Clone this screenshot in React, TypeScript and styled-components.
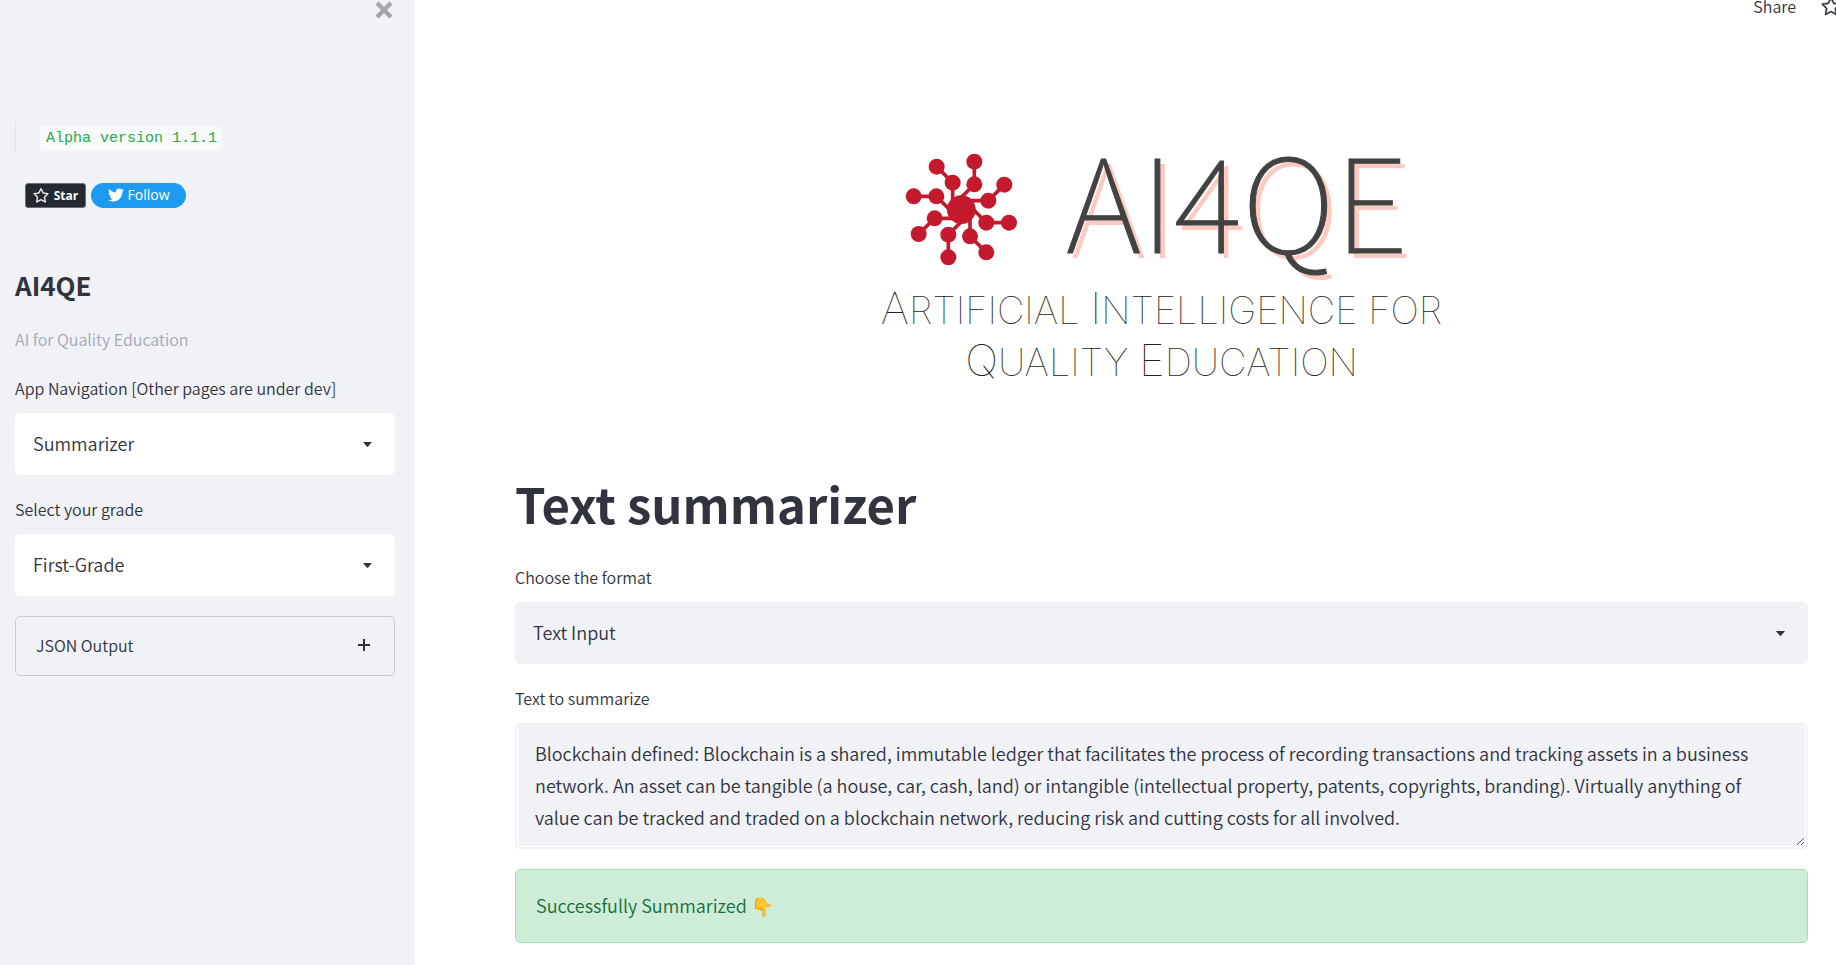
import React, { useId, useState } from "react";
import styled, { createGlobalStyle } from "styled-components";
import { FaTwitter } from "react-icons/fa";
import { GoStar } from "react-icons/go";

const ink = "#31333f";
const panel = "#f0f2f6";

const GlobalStyle = createGlobalStyle`
  * { box-sizing: border-box; }
  body {
    margin: 0;
    background: #fff;
    color: ${ink};
    font-family: "Noto Sans CJK SC", "Open Sans", sans-serif;
    font-size: 18px;
    font-weight: 350;
  }
  button, select, textarea { font: inherit; color: inherit; }
`;

const Page = styled.div`
  display: flex;
  min-height: 100vh;
`;

const Sidebar = styled.aside`
  flex: 0 0 415px;
  padding: 0 20px 20px 15px;
  background: ${panel};
`;

const CloseRow = styled.div`
  display: flex;
  justify-content: flex-end;
  height: 121px;
  padding-right: 2px;
`;

const CloseButton = styled.button`
  display: flex;
  width: 18px;
  height: 18px;
  padding: 0;
  border: 0;
  background: none;
  color: #a3a6ad;
`;

const VersionQuote = styled.blockquote`
  display: flex;
  align-items: flex-end;
  height: 32px;
  margin: 0 0 30px;
  padding: 0 0 2px 24px;
  border-left: 1px solid #e3e5ea;
`;

const VersionCode = styled.code`
  padding: 0 6px;
  border-radius: 5px;
  background: #f8f9fb;
  color: #21ad4b;
  font-family: "Liberation Mono", monospace;
  font-size: 15px;
  font-weight: 400;
  line-height: 25px;
`;

const BadgeRow = styled.div`
  display: flex;
  gap: 5px;
  margin-bottom: 60px;
  padding-left: 10px;
`;

const Badge = styled.a<{ $pill?: boolean }>`
  display: flex;
  align-items: center;
  justify-content: center;
  gap: ${(p) => (p.$pill ? 4 : 5)}px;
  width: ${(p) => (p.$pill ? 95 : 61)}px;
  height: 25px;
  padding-bottom: ${(p) => (p.$pill ? 2 : 0)}px;
  border: ${(p) => (p.$pill ? "0" : "1px solid #6b6f78")};
  border-radius: ${(p) => (p.$pill ? 13 : 3)}px;
  background: ${(p) => (p.$pill ? "#1d9bf0" : "#24292f")};
  color: #fff;
  font-family: "Open Sans", sans-serif;
  font-size: ${(p) => (p.$pill ? 14 : 12)}px;
  font-weight: ${(p) => (p.$pill ? 500 : 700)};
  text-decoration: none;
`;

const SidebarTitle = styled.h2`
  margin: 0 0 22px;
  font-size: 26px;
  font-weight: 600;
  line-height: 34px;
`;

const Caption = styled.p`
  margin: 0 0 20px;
  color: #a3a8b8;
  font-size: 16px;
  line-height: 30px;
`;

const Stack = styled.div`
  display: flex;
  flex-direction: column;
  gap: 20px;
`;

const FieldLabel = styled.label`
  display: block;
  margin-bottom: 11px;
  font-size: 16px;
  line-height: 28px;
`;

const SelectBox = styled.div<{ $white?: boolean }>`
  display: grid;
  align-items: center;
  height: 62px;
  border-radius: 5px;
  background: ${(p) => (p.$white ? "#fff" : panel)};
`;

const NativeSelect = styled.select`
  grid-area: 1 / 1;
  width: 100%;
  height: 62px;
  padding: 0 50px 2px 18px;
  border: 0;
  background: none;
  appearance: none;
`;

const Caret = styled.svg`
  grid-area: 1 / 1;
  justify-self: end;
  margin-right: 23px;
  pointer-events: none;
`;

const Expander = styled.button`
  display: flex;
  align-items: center;
  justify-content: space-between;
  height: 60px;
  padding: 0 24px 2px 20px;
  border: 1px solid #c9cbd0;
  border-radius: 5px;
  background: none;
  font-size: 16px;
`;

const Main = styled.main`
  flex: 1;
  min-width: 0;
  padding: 0 28px 22px 100px;
`;

const Toolbar = styled.header`
  display: flex;
  justify-content: flex-end;
  gap: 25px;
  height: 126px;
  margin-right: -28px;
  overflow: hidden;
`;

const ToolButton = styled.button<{ $clipped?: boolean }>`
  display: flex;
  align-items: center;
  height: 13px;
  margin-right: ${(p) => (p.$clipped ? -5 : 0)}px;
  padding: 0;
  border: 0;
  background: none;
  font-size: 16px;
  line-height: 13px;
`;

const Logo = styled.div`
  display: flex;
  flex-direction: column;
  align-items: center;
  margin-bottom: 85px;
  white-space: nowrap;
`;

const LogoTop = styled.div`
  display: flex;
  align-items: flex-end;
  gap: 48px;
  margin-bottom: 18px;
  padding-right: 10px;
`;

const Wordmark = styled.span`
  color: #424242;
  font-size: 130px;
  font-weight: 100;
  line-height: 140px;
  -webkit-text-stroke: 1px #424242;
  text-shadow: 5px 5px 0 #ffc9bf;
`;

const Tagline = styled.span`
  color: #222;
  font-family: Inter, sans-serif;
  font-size: 38px;
  font-weight: 100;
  line-height: 52px;
`;

const Initial = styled.span`
  font-size: 44px;
  line-height: 0;
`;

const PageTitle = styled.h1`
  margin: 0 0 30px;
  font-size: 49px;
  font-weight: 700;
  line-height: 60px;
`;

const TextAreaFrame = styled.div`
  display: flex;
  border: 2px solid ${panel};
  border-radius: 5px;
  background: #fff;
`;

const TextArea = styled.textarea`
  flex: 1;
  height: 121px;
  margin: 0 1px 1px;
  padding: 12px 17px;
  border: 0;
  border-radius: 2px;
  background: ${panel};
  line-height: 32px;
  resize: vertical;
`;

const Alert = styled.div`
  display: flex;
  align-items: center;
  height: 74px;
  padding: 0 20px 2px;
  border: 1px solid #a5dfb9;
  border-radius: 5px;
  background: #ceedd8;
  color: #176c36;
`;

function SelectField({ label, options, white }: { label: string; options: string[]; white?: boolean }) {
  const id = useId();
  return (
    <div>
      <FieldLabel htmlFor={id}>{label}</FieldLabel>
      <SelectBox $white={white}>
        <NativeSelect id={id}>
          {options.map((o) => (
            <option key={o}>{o}</option>
          ))}
        </NativeSelect>
        <Caret width="9" height="5" viewBox="0 0 9 5" aria-hidden="true">
          <path d="M0 0h9L5.2 4.6q-.7.6-1.4 0z" fill={ink} />
        </Caret>
      </SelectBox>
    </div>
  );
}

/* Hub with eight two-node arms: [inner x, inner y, outer x, outer y, hub x, hub y] */
const arms = [
  [249, 159, 201, 111, 249, 215],
  [314, 164, 314, 96, 275, 203],
  [356, 213, 404, 165, 300, 213],
  [350, 279, 418, 279, 312, 240],
  [301, 320, 350, 368, 301, 270],
  [236, 315, 236, 383, 275, 276],
  [195, 266, 147, 313, 250, 266],
  [200, 200, 132, 200, 238, 238],
];

function NetworkIcon() {
  return (
    <svg width="113" height="113" viewBox="106 70 339 339" fill="#c41a2d" stroke="#c41a2d" aria-hidden="true">
      <circle cx="275" cy="240" r="43" stroke="none" />
      {arms.map(([ix, iy, ox, oy, hx, hy]) => (
        <g key={`${ix}-${iy}`}>
          <path d={`M${hx} ${hy}L${ix} ${iy}L${ox} ${oy}`} fill="none" strokeWidth="11" />
          <circle cx={ix} cy={iy} r="24" stroke="none" />
          <circle cx={ox} cy={oy} r="24" stroke="none" />
        </g>
      ))}
    </svg>
  );
}

export default function App() {
  const [text, setText] = useState(
    "Blockchain defined: Blockchain is a shared, immutable ledger that facilitates the process of recording transactions and tracking assets in a business network. An asset can be tangible (a house, car, cash, land) or intangible (intellectual property, patents, copyrights, branding). Virtually anything of value can be tracked and traded on a blockchain network, reducing risk and cutting costs for all involved."
  );
  return (
    <>
      <GlobalStyle />
      <Page>
        <Sidebar>
          <CloseRow>
            <CloseButton aria-label="Close sidebar">
              <svg width="18" height="18" viewBox="0 0 18 18" fill="none" stroke="currentColor" strokeWidth="4.4">
                <path d="M2 3l14 14M16 3L2 17" />
              </svg>
            </CloseButton>
          </CloseRow>
          <VersionQuote>
            <VersionCode>Alpha version 1.1.1</VersionCode>
          </VersionQuote>
          <BadgeRow>
            <Badge href="#star">
              <GoStar size={16} strokeWidth={0.5} />
              Star
            </Badge>
            <Badge href="#follow" $pill>
              <FaTwitter size={16} />
              Follow
            </Badge>
          </BadgeRow>
          <SidebarTitle>AI4QE</SidebarTitle>
          <Caption>AI for Quality Education</Caption>
          <Stack>
            <SelectField white label="App Navigation [Other pages are under dev]" options={["Summarizer"]} />
            <SelectField white label="Select your grade" options={["First-Grade"]} />
            <Expander aria-expanded="false">
              JSON Output
              <svg width="12" height="12" viewBox="0 0 12 12" stroke={ink} strokeWidth="2" aria-hidden="true">
                <path d="M6 0v12M0 6h12" />
              </svg>
            </Expander>
          </Stack>
        </Sidebar>
        <Main>
          <Toolbar>
            <ToolButton>Share</ToolButton>
            <ToolButton $clipped aria-label="Favorite">
              <GoStar size={20} strokeWidth={0.5} />
            </ToolButton>
          </Toolbar>
          <Logo>
            <LogoTop>
              <NetworkIcon />
              <Wordmark>AI4QE</Wordmark>
            </LogoTop>
            <Tagline>
              <Initial>A</Initial>RTIFICIAL <Initial>I</Initial>NTELLIGENCE FOR
            </Tagline>
            <Tagline>
              <Initial>Q</Initial>UALITY <Initial>E</Initial>DUCATION
            </Tagline>
          </Logo>
          <PageTitle>Text summarizer</PageTitle>
          <Stack>
            <SelectField label="Choose the format" options={["Text Input"]} />
            <div>
              <FieldLabel htmlFor="source-text">Text to summarize</FieldLabel>
              <TextAreaFrame>
                <TextArea id="source-text" value={text} onChange={(e) => setText(e.target.value)} />
              </TextAreaFrame>
            </div>
            <Alert role="status">Successfully Summarized 👇</Alert>
          </Stack>
        </Main>
      </Page>
    </>
  );
}
